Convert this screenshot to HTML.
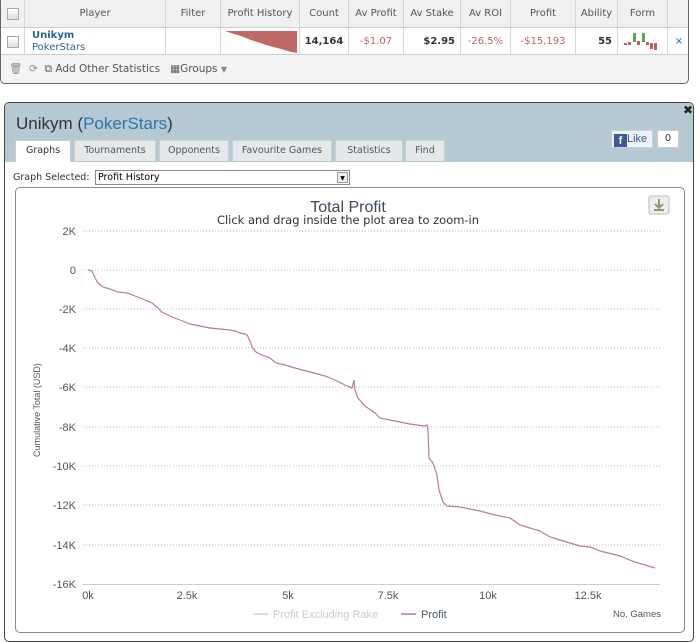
<!DOCTYPE html>
<html><head><meta charset="utf-8"><style>
*{box-sizing:border-box}
body{margin:0;width:700px;height:638px;background:#fff;font-family:"DejaVu Sans","Liberation Sans",sans-serif;position:relative;overflow:hidden}
.tbl{position:absolute;left:0;top:0;width:689px;height:84px;border:1px solid #666;border-radius:0 0 5px 5px;border-top:none;background:#f3f3f3;overflow:hidden}
.c{position:absolute;font-size:10px;color:#555;text-align:center;border-right:1px solid #d8d8d8}
.hdr{top:0;height:27px;line-height:27px;background:#f0f0f0}
.row{top:27px;height:28px;line-height:28px;background:#fff;border-top:1px solid #ccc;border-bottom:1px solid #ccc}
.cb{position:absolute;width:12px;height:12px;border:1px solid #aaa;background:linear-gradient(#fff,#ddd)}
.red{color:#b06a6a}
.tab{position:absolute;top:140px;height:21px;background:#e4e8ea;border:1px solid #c5cfd4;border-bottom:none;font-size:9.5px;line-height:20px;color:#555;text-align:center}
</style></head><body>
<div class="tbl">
 <div class="c hdr" style="left:0;width:24px"><div class="cb" style="left:6px;top:8px"></div></div>
 <div class="c hdr" style="left:24px;width:141px">Player</div>
 <div class="c hdr" style="left:165px;width:55px">Filter</div>
 <div class="c hdr" style="left:220px;width:79px">Profit History</div>
 <div class="c hdr" style="left:299px;width:49px">Count</div>
 <div class="c hdr" style="left:348px;width:55px">Av Profit</div>
 <div class="c hdr" style="left:403px;width:57px">Av Stake</div>
 <div class="c hdr" style="left:460px;width:50px">Av ROI</div>
 <div class="c hdr" style="left:510px;width:65px">Profit</div>
 <div class="c hdr" style="left:575px;width:42px">Ability</div>
 <div class="c hdr" style="left:617px;width:50px">Form</div>
 <div class="c hdr" style="left:667px;width:22px;border:none"></div>
 <div class="c row" style="left:0;width:24px"><div class="cb" style="left:6px;top:8px"></div></div>
 <div class="c row" style="left:24px;width:141px;text-align:left;padding-left:7px;line-height:12px;padding-top:2px;color:#2a6496"><b>Unikym</b><br>PokerStars</div>
 <div class="c row" style="left:165px;width:55px"></div>
 <div class="c row" style="left:220px;width:79px"><svg width="79" height="27" style="position:absolute;left:0;top:0"><polygon points="4,3 76,3 76,25 70,24 60,21 45,17 30,12 20,8 10,5" fill="#c06868"/></svg></div>
 <div class="c row" style="left:299px;width:49px;font-weight:bold;color:#333">14,164</div>
 <div class="c row red" style="left:348px;width:55px">-$1.07</div>
 <div class="c row" style="left:403px;width:57px;text-align:right;padding-right:5px;font-weight:bold;color:#333">$2.95</div>
 <div class="c row red" style="left:460px;width:50px">-26.5%</div>
 <div class="c row red" style="left:510px;width:65px">-$15,193</div>
 <div class="c row" style="left:575px;width:42px;text-align:right;padding-right:5px;font-weight:bold;color:#333">55</div>
 <div class="c row" style="left:617px;width:50px"><svg width="50" height="27" style="position:absolute;left:0;top:0"><rect x="6" y="15" width="3" height="2" fill="#c06060"/><rect x="10" y="14" width="3" height="3" fill="#c06060"/><rect x="15" y="5" width="3" height="9" fill="#5a5"/><rect x="19" y="13" width="3" height="4" fill="#c06060"/><rect x="24" y="5" width="3" height="9" fill="#5a5"/><rect x="28" y="14" width="3" height="3" fill="#c06060"/><rect x="32" y="15" width="3" height="6" fill="#c06060"/><rect x="36" y="15" width="3" height="7" fill="#c06060"/></svg></div>
 <div class="c row" style="left:667px;width:22px;border-right:none;color:#2a6496">⨯</div>
 <div style="position:absolute;left:8px;top:62px;font-size:10.5px;color:#555;white-space:nowrap"><span style="color:#888">🗑 &nbsp;⟳ &nbsp;</span>⧉ Add Other Statistics &nbsp;&nbsp;▦Groups <span style="font-size:8px;color:#888">▼</span></div>
</div>

<div style="position:absolute;left:4px;top:102px;width:690px;height:540px;border:1px solid #444;border-radius:5px;background:#fff;overflow:hidden">
 <div style="position:absolute;left:0;top:0;width:100%;height:59px;background:#b4c9d1"></div>
 <div style="position:absolute;left:11px;top:11px;font-family:'Liberation Sans',sans-serif;font-size:17px;color:#333">Unikym (<span style="color:#2a74b0">PokerStars</span>)</div>
 <div style="position:absolute;left:606px;top:27px;width:42px;height:18px;background:#eef2f5;border:1px solid #c8d4dc;font-family:'Liberation Sans',sans-serif;font-size:11px;color:#3b5998;line-height:16px;padding-left:2px"><span style="display:inline-block;width:13px;height:13px;background:#3b5998;color:#fff;font-weight:bold;text-align:center;line-height:14px;font-size:11px;vertical-align:-2px">f</span>Like</div>
 <div style="position:absolute;left:652px;top:27px;width:22px;height:18px;background:#fff;border:1px solid #ccc;font-size:10px;text-align:center;line-height:16px;color:#333">0</div>
</div>
<div style="position:absolute;left:683px;top:103px;font-size:12px;font-weight:bold;color:#222">✖</div>
<div class="tab" style="left:15px;width:56px;background:#fff;height:22px;color:#333">Graphs</div>
<div class="tab" style="left:74px;width:82px">Tournaments</div>
<div class="tab" style="left:159px;width:70px">Opponents</div>
<div class="tab" style="left:232px;width:100px">Favourite Games</div>
<div class="tab" style="left:335px;width:68px">Statistics</div>
<div class="tab" style="left:405px;width:40px">Find</div>
<div style="position:absolute;left:13px;top:172px;font-size:9.5px;color:#333">Graph Selected:</div>
<div style="position:absolute;left:95px;top:170px;width:255px;height:15px;border:1px solid #888;font-size:9.5px;line-height:13px;padding-left:2px;color:#000">Profit History<span style="position:absolute;right:1px;top:1px;width:11px;height:11px;border:1px solid #999;background:#eee;font-size:6px;text-align:center;line-height:11px">▼</span></div>

<div style="position:absolute;left:15px;top:187px;width:670px;height:446px;border:1px solid #888;border-radius:5px"></div>
<svg width="700" height="638" style="position:absolute;left:0;top:0" font-family="Liberation Sans, sans-serif">
 <text x="348" y="212" font-size="16" fill="#3d4a57" text-anchor="middle">Total Profit</text>
 <text x="348" y="224" font-size="11.5" fill="#333" text-anchor="middle" font-family="DejaVu Sans, sans-serif" textLength="262">Click and drag inside the plot area to zoom-in</text>
 <rect x="649" y="196" width="20" height="18" rx="2" fill="#eee" stroke="#bbb"/>
 <path d="M659 199v8M655 204l4 4 4-4M654 210h10" stroke="#8a9a6a" stroke-width="2" fill="none"/>
 <g stroke="#bbb" stroke-dasharray="1,2" stroke-width="1">
  <line x1="83" y1="231" x2="660" y2="231"/><line x1="83" y1="270" x2="660" y2="270"/><line x1="83" y1="309" x2="660" y2="309"/><line x1="83" y1="348" x2="660" y2="348"/><line x1="83" y1="387" x2="660" y2="387"/><line x1="83" y1="427" x2="660" y2="427"/><line x1="83" y1="466" x2="660" y2="466"/><line x1="83" y1="505" x2="660" y2="505"/><line x1="83" y1="545" x2="660" y2="545"/>
 </g>
 <line x1="83" y1="584.5" x2="660" y2="584.5" stroke="#ccc"/>
 <g font-size="11" fill="#555" text-anchor="end">
  <text x="76" y="235">2K</text><text x="76" y="274">0</text><text x="76" y="313">-2K</text><text x="76" y="352">-4K</text><text x="76" y="391">-6K</text><text x="76" y="431">-8K</text><text x="76" y="470">-10K</text><text x="76" y="509">-12K</text><text x="76" y="549">-14K</text><text x="76" y="588">-16K</text>
 </g>
 <g font-size="11" fill="#555" text-anchor="middle">
  <text x="88" y="599">0k</text><text x="187" y="599">2.5k</text><text x="288" y="599">5k</text><text x="388" y="599">7.5k</text><text x="488" y="599">10k</text><text x="588" y="599">12.5k</text>
 </g>
 <text x="40" y="410" font-size="9" fill="#555" text-anchor="middle" transform="rotate(-90 40 410)">Cumulative Total (USD)</text>
 <text x="661" y="617" font-size="9.5" fill="#555" text-anchor="end">No. Games</text>
 <line x1="253" y1="614" x2="268" y2="614" stroke="#ddd" stroke-width="2"/>
 <text x="273" y="618" font-size="11" fill="#ccc">Profit Excluding Rake</text>
 <line x1="401" y1="614" x2="416" y2="614" stroke="#c9a0a0" stroke-width="2"/>
 <text x="421" y="618" font-size="11" fill="#4a5868">Profit</text>
 <polyline fill="none" stroke="#b88080" stroke-width="1.2" points="88,270 92,271 95,278 98,283 103,287 110,289 118,292 127,293 135,296 145,300 152,303 158,308 162,312 170,316 180,320 190,324 200,326 210,328 220,329 230,330 235,331 240,333 245,334 247,335 250,341 252,347 256,352 262,355 270,358 276,363 285,365 295,368 310,372 325,376 335,380 345,385 352,388 354,380 355,390 358,398 365,406 375,413 380,418 390,420 410,424 424,426 427,425 428,430 429,458 433,463 437,475 439,490 443,502 447,506 460,507 480,511 495,515 510,518 520,525 540,531 550,537 560,540 570,543 580,546 590,547 600,551 620,556 635,562 645,565 655,568"/>
</svg>
</body></html>
